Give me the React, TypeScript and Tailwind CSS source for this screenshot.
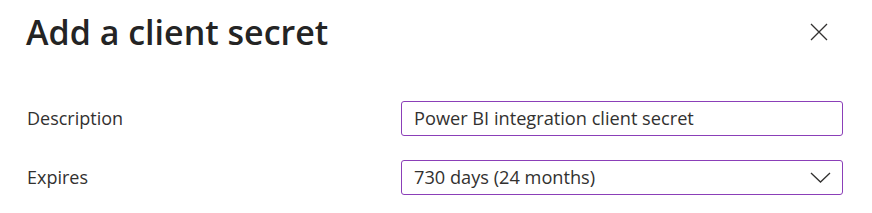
import React from "react";

export default function App() {
  return (
    <div className="w-[872px] h-[213px] bg-white text-[#323130]" style={{ fontFamily: '"Open Sans", "Noto Sans", sans-serif' }}>
      <div className="flex items-start justify-between pl-[26px] pr-[44px] pt-[8px]">
        <h1 className="text-[34px] leading-[48px] font-semibold text-[#242424]">Add a client secret</h1>
        <button className="mt-[15px] w-[18px] h-[18px] flex items-center justify-center">
          <svg width="18" height="18" viewBox="0 0 18 18" fill="none" stroke="#323130" strokeWidth="1.3">
            <path d="M1 1L17 17M17 1L1 17" />
          </svg>
        </button>
      </div>
      <div className="flex flex-col gap-[24px] pl-[27px] pr-[29px] mt-[45px]">
        <div className="flex items-center">
          <div className="w-[374px] text-[18px]">Description</div>
          <div className="flex-1 h-[35px] border border-[#8b3fb8] rounded-[3px] flex items-center px-[12px] text-[18.2px]">
            Power BI integration client secret
          </div>
        </div>
        <div className="flex items-center">
          <div className="w-[374px] text-[18px]">Expires</div>
          <div className="flex-1 h-[35px] border border-[#8b3fb8] rounded-[3px] flex items-center justify-between pl-[12px] pr-[11px] text-[18.2px]">
            <span>730 days (24 months)</span>
            <svg width="21" height="11" viewBox="0 0 21 11" fill="none" stroke="#323130" strokeWidth="1.3">
              <path d="M1 1L10.5 10L20 1" />
            </svg>
          </div>
        </div>
      </div>
    </div>
  );
}
